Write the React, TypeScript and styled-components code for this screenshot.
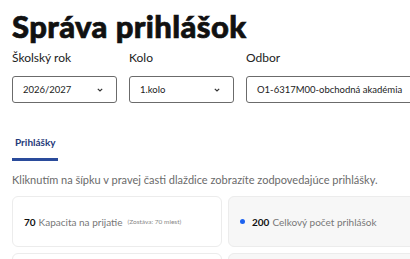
import styled, { createGlobalStyle } from 'styled-components';

const GlobalStyle = createGlobalStyle`
  html, body {
    margin: 0;
    padding: 0;
    background: #ffffff;
    overflow: hidden;
  }
  body {
    font-family: 'Lato', 'Noto Sans', sans-serif;
    color: #1a1a1a;
  }
`;

const Page = styled.div`
  width: 640px;
  padding: 9px 12px 0 12px;
`;

const Title = styled.h1`
  margin: 0;
  font-family: 'Lato', sans-serif;
  font-size: 31px;
  font-weight: 900;
  letter-spacing: 0.4px;
  line-height: 34px;
  color: #111111;
  -webkit-text-stroke: 0.7px #111111;
`;

const Filters = styled.div`
  display: flex;
  gap: 12px;
  margin-top: 7px;
`;

const Field = styled.div<{ $width: number }>`
  display: flex;
  flex-direction: column;
  gap: 10px;
  width: ${(p) => p.$width}px;
`;

const Label = styled.label`
  font-size: 12px;
  line-height: 16px;
  color: #222222;
`;

const Select = styled.div`
  display: flex;
  align-items: center;
  justify-content: space-between;
  box-sizing: border-box;
  height: 27px;
  padding: 0 13px 0 10px;
  border: 1px solid #6b6b6b;
  border-radius: 3px;
  font-size: 9.5px;
  color: #222222;
  background: #ffffff;
  white-space: nowrap;
`;

const Tabs = styled.div`
  display: flex;
  margin-top: 32px;
`;

const Tab = styled.div<{ $active?: boolean }>`
  padding: 0 3px 9px 3px;
  font-size: 10px;
  font-weight: 700;
  line-height: 14px;
  color: ${(p) => (p.$active ? '#1f3a7a' : '#555555')};
  border-bottom: 3px solid ${(p) => (p.$active ? '#2a4b9b' : 'transparent')};
  width: 40px;
`;

const Hint = styled.p`
  margin: 12px 0 0 0;
  font-size: 11px;
  line-height: 14px;
  color: #6a6a6a;
`;

const Cards = styled.div`
  display: grid;
  grid-template-columns: 210px 210px;
  gap: 6px;
  margin-top: 9px;
`;

const Card = styled.div<{ $muted?: boolean }>`
  display: flex;
  align-items: center;
  gap: 3px;
  box-sizing: border-box;
  height: 51px;
  padding: 0 11px;
  border: 1px solid #ececec;
  border-radius: 6px;
  background: ${(p) => (p.$muted ? '#f7f7f7' : '#ffffff')};
  font-size: 10px;
  color: #777777;
`;

const Value = styled.span`
  font-weight: 700;
  color: #111111;
`;

const Note = styled.span`
  font-size: 6.5px;
  color: #888888;
  margin-left: 2px;
`;

const Dot = styled.span`
  width: 5px;
  height: 5px;
  border-radius: 50%;
  background: #1e63f0;
  margin-right: 4px;
`;

const Chevron = () => (
  <svg width='6' height='4' viewBox='0 0 6 4' fill='none'>
    <path d='M0.8 0.8l2.2 2.2 2.2-2.2' stroke='#333' strokeWidth='1.2' />
  </svg>
);

export default function App() {
  return (
    <>
      <GlobalStyle />
      <Page>
        <Title>Správa prihlášok</Title>
        <Filters>
          <Field $width={105}>
            <Label>Školský rok</Label>
            <Select>2026/2027<Chevron /></Select>
          </Field>
          <Field $width={105}>
            <Label>Kolo</Label>
            <Select>1.kolo<Chevron /></Select>
          </Field>
          <Field $width={220}>
            <Label>Odbor</Label>
            <Select>O1-6317M00-obchodná akadémia</Select>
          </Field>
        </Filters>
        <Tabs>
          <Tab $active>Prihlášky</Tab>
        </Tabs>
        <Hint>Kliknutím na šípku v pravej časti dlaždice zobrazíte zodpovedajúce prihlášky.</Hint>
        <Cards>
          <Card>
            <Value>70</Value> Kapacita na prijatie <Note>(Zostáva: 70 miest)</Note>
          </Card>
          <Card $muted>
            <Dot />
            <Value>200</Value> Celkový počet prihlášok
          </Card>
          <Card />
          <Card $muted />
        </Cards>
      </Page>
    </>
  );
}
